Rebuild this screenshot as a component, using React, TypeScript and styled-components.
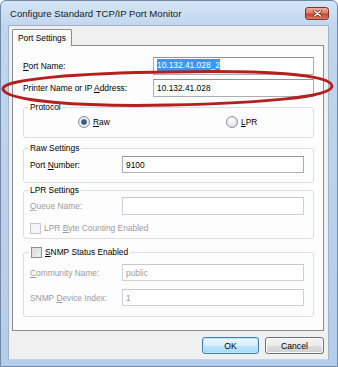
import React from 'react';
import styled, { createGlobalStyle } from 'styled-components';

const GlobalStyle = createGlobalStyle`
  html, body {
    margin: 0;
    padding: 0;
    background: #ffffff;
  }
  body {
    font-family: "Liberation Sans", Arial, sans-serif;
    font-size: 8.4px;
    color: #000;
  }
`;

const Window = styled.div`
  position: relative;
  width: 338px;
  height: 367px;
  box-sizing: border-box;
  display: flex;
  flex-direction: column;
  padding: 0 8px 6px 7px;

  background: linear-gradient(180deg, #d5e5f6 0%, #c0d6ee 26px, #b4cdea 100%);
  border: 1px solid #6f89a9;
  border-radius: 6px 6px 0 0;
`;

const TitleBar = styled.div`
  height: 24px;
  display: flex;
  align-items: center;
  padding: 0 0 0 2px;
`;

const Title = styled.span`
  font-size: 9.6px;
  color: #1b1b1b;
`;

const CloseButton = styled.div`
  margin-left: auto;
  width: 22px;
  height: 11px;
  display: flex;
  align-items: center;
  justify-content: center;

  background: linear-gradient(180deg, #eab0a2 0%, #dc7a66 45%, #c8432c 55%, #dc7c64 100%);
  border: 1px solid #7e3429;
  border-radius: 3px;
`;

const Client = styled.div`
  flex: 1;
  display: flex;
  flex-direction: column;
  padding: 3px 4px 0 4px;
  background: #f0f0f0;
  border: 1px solid #9fb3c9;
  border-bottom-color: #c4d4e4;
`;

const TabStrip = styled.div`
  display: flex;
  margin-left: -1px;
`;

const Tab = styled.div`
  position: relative;
  z-index: 1;
  width: 60px;
  height: 17px;
  box-sizing: border-box;
  margin-bottom: -1px;
  display: flex;
  align-items: center;
  justify-content: center;

  background: #fcfcfc;
  border: 1px solid #898c95;
  border-bottom: none;
  border-radius: 2px 2px 0 0;
`;

const Panel = styled.div`
  height: 286px;
  box-sizing: border-box;
  margin-left: -1px;
  display: flex;
  flex-direction: column;
  padding: 11px 9px 0 10px;

  background: #fdfdfd;
  border: 1px solid #898c95;
`;

const FormRow = styled.div<{ $gap?: number }>`
  height: 18px;
  display: flex;
  align-items: center;
  justify-content: space-between;
  margin-top: ${(p) => p.$gap ?? 0}px;
`;

const Label = styled.span<{ $disabled?: boolean }>`
  color: ${(p) => (p.$disabled ? '#9c9c9c' : '#000')};
  white-space: nowrap;
`;

const Key = styled.u`
  text-decoration: underline;
  text-underline-offset: 1px;
`;

const TextBox = styled.div<{ $width: number; $height?: number; $disabled?: boolean }>`
  width: ${(p) => p.$width}px;
  height: ${(p) => p.$height ?? 18}px;
  box-sizing: border-box;
  display: flex;
  align-items: center;
  padding-left: 3px;

  background: #ffffff;
  border: 1px solid ${(p) => (p.$disabled ? '#cdd0d6' : '#abadb3')};
  border-top-color: ${(p) => (p.$disabled ? '#c4c7cd' : '#8e9199')};
  color: ${(p) => (p.$disabled ? '#9c9c9c' : '#000')};
`;

const Selected = styled.span`
  display: inline-block;
  line-height: 13px;
  padding-bottom: 1px;
  background: #3399ff;
  color: #ffffff;
`;

const Group = styled.fieldset<{ $gap: number }>`
  margin: ${(p) => p.$gap}px 0 0 0;
  padding: 0;
  min-inline-size: 0;
  border: 1px solid #d5dfe5;
  border-radius: 3px;
`;

const Legend = styled.legend<{ $offset?: number }>`
  margin-left: ${(p) => p.$offset ?? 4}px;
  padding: 0 2px;
  line-height: 12px;
  display: flex;
  align-items: center;
  gap: 3px;
`;

const GroupBody = styled.div<{ $top: number; $bottom: number }>`
  display: flex;
  flex-direction: column;
  padding: ${(p) => p.$top}px 9px ${(p) => p.$bottom}px 6px;
`;

const GroupRow = styled.div<{ $height: number; $gap?: number }>`
  height: ${(p) => p.$height}px;
  display: flex;
  align-items: center;
  justify-content: space-between;
  margin-top: ${(p) => p.$gap ?? 0}px;
`;

const RadioRow = styled.div`
  height: 14px;
  display: flex;
  align-items: center;
  padding-left: 48px;
`;

const Option = styled.label<{ $width?: number }>`
  display: flex;
  align-items: center;
  gap: 3px;
  width: ${(p) => (p.$width ? `${p.$width}px` : 'auto')};
`;

const Radio = styled.span<{ $checked?: boolean }>`
  width: 10px;
  height: 10px;
  border-radius: 50%;
  border: 1px solid #8d9297;
  background: ${(p) =>
    p.$checked
      ? 'radial-gradient(circle, #3b5e88 0 2.2px, #7d9cc0 2.8px, #f1f1f1 3.4px, #d9d9d9 100%)'
      : 'radial-gradient(circle at 40% 35%, #ffffff 0, #e6e6e6 60%, #cfcfcf 100%)'};
`;

const CheckBox = styled.span<{ $disabled?: boolean }>`
  width: 9px;
  height: 9px;
  flex: none;
  border: 1px solid ${(p) => (p.$disabled ? '#c6c8cc' : '#8f8f8f')};
  background: ${(p) =>
    p.$disabled
      ? 'linear-gradient(135deg, #f0f0f0, #fbfbfb)'
      : 'linear-gradient(135deg, #d4d4d4, #f6f6f6)'};
  box-shadow: inset 0 0 0 1px ${(p) => (p.$disabled ? '#f4f4f4' : '#e6e6e6')};
`;

const ButtonRow = styled.div`
  display: flex;
  justify-content: flex-end;
  gap: 6px;
  margin-top: 6px;
`;

const Button = styled.button<{ $default?: boolean; $width: number }>`
  width: ${(p) => p.$width}px;
  height: 17px;
  padding: 0;
  font-family: inherit;
  font-size: 8.6px;
  color: #000;
  border-radius: 3px;
  border: 1px solid ${(p) => (p.$default ? '#3c7fb1' : '#707070')};
  background: ${(p) =>
    p.$default
      ? 'linear-gradient(180deg, #eaf6fd 0%, #d9f0fc 50%, #bee6fd 51%, #a7d9f5 100%)'
      : 'linear-gradient(180deg, #f2f2f2 0%, #ebebeb 50%, #dddddd 51%, #cfcfcf 100%)'};
  box-shadow: inset 0 0 0 1px ${(p) => (p.$default ? '#c5e6f8' : '#fcfcfc')};
`;

const Ellipse = styled.svg`
  position: absolute;
  left: -1px;
  top: -1px;
  pointer-events: none;
`;

const App = () => {
  return (
    <>
      <GlobalStyle />
      <Window>
        <TitleBar>
          <Title>Configure Standard TCP/IP Port Monitor</Title>
          <CloseButton>
            <svg width="9" height="7" viewBox="0 0 9 7">
              <path d="M1.5 1 L7.5 6 M7.5 1 L1.5 6" stroke="#5a1a12" strokeWidth="2.6" strokeLinecap="round" />
              <path d="M1.5 1 L7.5 6 M7.5 1 L1.5 6" stroke="#ffffff" strokeWidth="1.5" strokeLinecap="round" />
            </svg>
          </CloseButton>
        </TitleBar>

        <Client>
          <TabStrip>
            <Tab>Port Settings</Tab>
          </TabStrip>
          <Panel>
            <FormRow>
              <Label><Key>P</Key>ort Name:</Label>
              <TextBox $width={161}><Selected>10.132.41.028_2</Selected></TextBox>
            </FormRow>
            <FormRow $gap={4}>
              <Label>Printer Name or IP <Key>A</Key>ddress:</Label>
              <TextBox $width={161}>10.132.41.028</TextBox>
            </FormRow>

            <Group $gap={4}>
              <Legend>Protocol</Legend>
              <GroupBody $top={2} $bottom={8}>
                <RadioRow>
                  <Option $width={148}>
                    <Radio $checked />
                    <span><Key>R</Key>aw</span>
                  </Option>
                  <Option>
                    <Radio />
                    <span><Key>L</Key>PR</span>
                  </Option>
                </RadioRow>
              </GroupBody>
            </Group>

            <Group $gap={4}>
              <Legend>Raw Settings</Legend>
              <GroupBody $top={2} $bottom={9}>
                <GroupRow $height={17}>
                  <Label>Port <Key>N</Key>umber:</Label>
                  <TextBox $width={182} $height={17}>9100</TextBox>
                </GroupRow>
              </GroupBody>
            </Group>

            <Group $gap={1}>
              <Legend>LPR Settings</Legend>
              <GroupBody $top={1} $bottom={3}>
                <GroupRow $height={18}>
                  <Label $disabled><Key>Q</Key>ueue Name:</Label>
                  <TextBox $width={182} $disabled />
                </GroupRow>
                <GroupRow $height={14} $gap={6}>
                  <Option>
                    <CheckBox $disabled />
                    <Label $disabled>LPR <Key>B</Key>yte Counting Enabled</Label>
                  </Option>
                </GroupRow>
              </GroupBody>
            </Group>

            <Group $gap={7}>
              <Legend $offset={5}>
                <CheckBox />
                <span><Key>S</Key>NMP Status Enabled</span>
              </Legend>
              <GroupBody $top={6} $bottom={10}>
                <GroupRow $height={17}>
                  <Label $disabled><Key>C</Key>ommunity Name:</Label>
                  <TextBox $width={182} $height={17} $disabled>public</TextBox>
                </GroupRow>
                <GroupRow $height={17} $gap={8}>
                  <Label $disabled>SNMP <Key>D</Key>evice Index:</Label>
                  <TextBox $width={182} $height={17} $disabled>1</TextBox>
                </GroupRow>
              </GroupBody>
            </Group>
          </Panel>

          <ButtonRow>
            <Button $default $width={57}>OK</Button>
            <Button $width={59}>Cancel</Button>
          </ButtonRow>
        </Client>

        <Ellipse width="338" height="367" viewBox="0 0 338 367">
          <path
            d="M170 72 C 262 70, 331 74, 332 86 C 333 97, 262 103, 170 105 C 80 107, 5 101, 3 89 C 2 79, 80 73, 170 72 Z"
            fill="none"
            stroke="#b3201f"
            strokeWidth="3"
          />
        </Ellipse>
      </Window>
    </>
  );
};

export default App;
